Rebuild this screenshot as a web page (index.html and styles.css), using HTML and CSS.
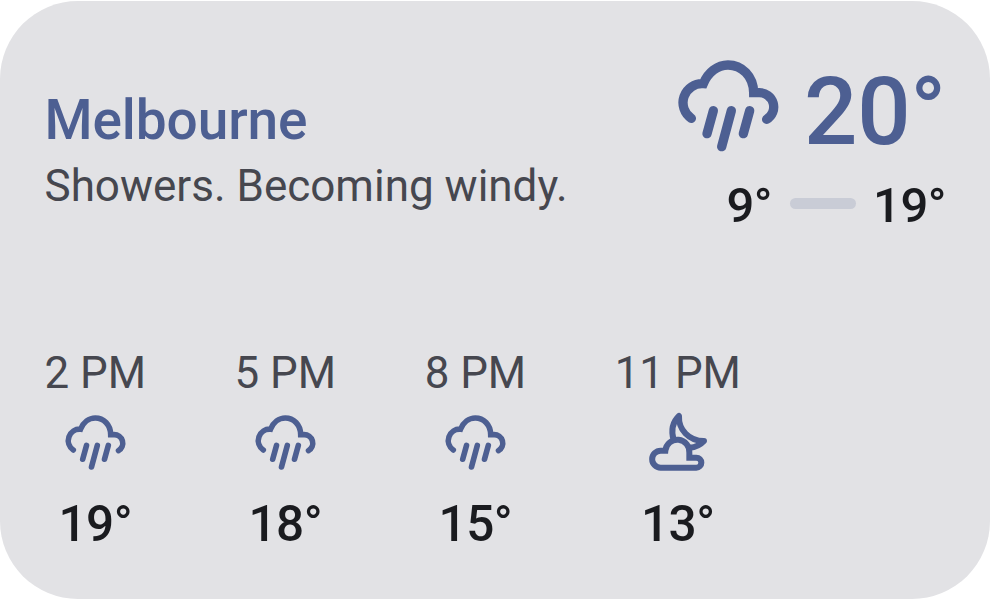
FILE: index.html
```html
<!DOCTYPE html>
<html lang="en">
<head>
<meta charset="utf-8">
<title>Melbourne weather</title>
<link rel="stylesheet" href="styles.css">
</head>
<body>
<svg class="sprite" aria-hidden="true">
  <symbol id="rain" viewBox="0 0 360 330">
    <g fill="none" stroke="currentColor" stroke-width="28" stroke-linecap="round">
      <path d="M64 205A57 57 0 0 1 100 101C114 67 143 45 174 45C215 45 250 78 251 128H267A43 43 0 0 1 290 208"/>
      <path d="M130 182L111 251M184 182L155 290M239 182L220 251"/>
    </g>
  </symbol>
  <symbol id="night" viewBox="0 0 240 225">
    <g fill="none" stroke="currentColor" stroke-width="18" stroke-linejoin="round">
      <path stroke-linejoin="miter" d="M62 188A25.500 25.500 0 0 1 62 137H76A36 36 0 0 1 148 144V158H169A15 15 0 0 1 169 188Z"/>
      <path d="M101 106C93 78 98 51 117 33C115 73 146 108 192 108C180 121 165 127 149 128"/>
    </g>
  </symbol>
</svg>
<main class="card">
  <header class="top">
    <div class="place">
      <h1 class="city">Melbourne</h1>
      <p class="summary">Showers. Becoming windy.</p>
    </div>
    <div class="now">
      <div class="current"><svg class="icon-large"><use href="#rain"/></svg><span class="degrees">20°</span></div>
      <div class="range"><span>9°</span><i class="bar"></i><span>19°</span></div>
    </div>
  </header>
  <section class="hours">
    <div class="hour"><span class="time">2 PM</span><svg class="icon"><use href="#rain"/></svg><span class="temp">19°</span></div>
    <div class="hour"><span class="time">5 PM</span><svg class="icon"><use href="#rain"/></svg><span class="temp">18°</span></div>
    <div class="hour"><span class="time">8 PM</span><svg class="icon"><use href="#rain"/></svg><span class="temp">15°</span></div>
    <div class="hour"><span class="time">11 PM</span><svg class="icon-night"><use href="#night"/></svg><span class="temp">13°</span></div>
  </section>
</main>
</body>
</html>
```
FILE: styles.css
```css
* { box-sizing: border-box; }
body { margin: 0; background: #fff; font-family: Roboto, sans-serif; color: #1a1b1f; }
.sprite { display: block; width: 0; height: 0; }
.card {
  width: 990px;
  height: 598px;
  margin-top: 1px;
  padding: 49px 44px 0 44.5px;
  background: #e2e2e5;
  border-radius: 78px;
  display: flow-root;
}
.top { display: flex; justify-content: space-between; height: 292.5px; }
.place { padding-top: 37px; }
.city { margin: 0; font-size: 55px; font-weight: 500; line-height: 66px; letter-spacing: -0.1px; color: #4d5f92; }
.summary { margin: 5px 0 0; font-size: 44px; line-height: 56px; color: #46474f; white-space: nowrap; }
.now { display: flex; flex-direction: column; align-items: flex-end; color: #4d5f92; }
.current { display: flex; height: 120px; }
.icon-large { width: 120px; height: 110px; }
.degrees { margin-left: 14.5px; font-size: 94px; font-weight: 500; line-height: 124px; letter-spacing: -0.3px; }
.range { display: flex; align-items: center; height: 60px; margin-top: 6px; color: #1a1b1f; font-size: 49px; font-weight: 500; line-height: 60px; letter-spacing: -0.5px; }
.bar { width: 66px; height: 11px; margin: 0 17.5px; border-radius: 6px; background: #c9ccd6; position: relative; top: -3px; }
.hours { display: flex; gap: 88.5px; }
.hour { display: flex; flex-direction: column; align-items: center; color: #4d5f92; }
.time { font-size: 43.9px; line-height: 60px; color: #46474f; }
.icon { width: 73px; height: 66px; margin: 6.5px 0 19px 2px; }
.icon-night { width: 80px; height: 75px; margin: 2.5px 0 14px 4px; }
.temp { font-size: 49.5px; font-weight: 500; line-height: 60px; color: #1a1b1f; letter-spacing: -0.5px; }
```
